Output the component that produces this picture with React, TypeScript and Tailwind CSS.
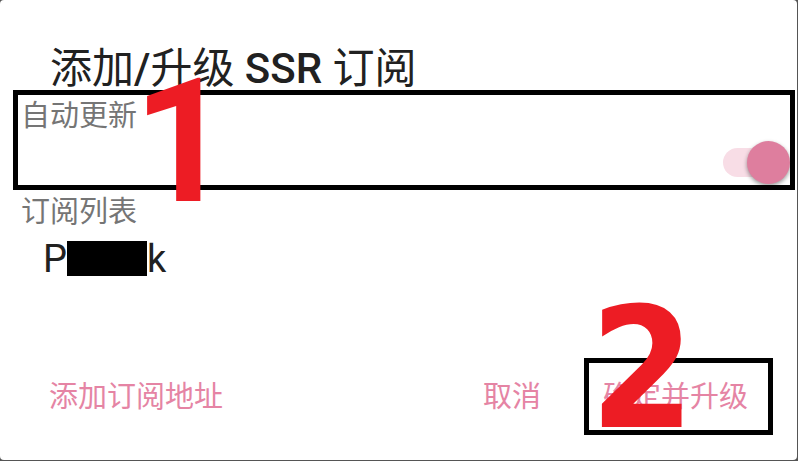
import { useState } from "react";

export default function App() {
  const [autoUpdate, setAutoUpdate] = useState(true);

  return (
    <div className="flex min-h-screen bg-[#555555] pr-px pb-px font-[Roboto,'Noto_Sans_CJK_SC',sans-serif]">
      <main className="flex flex-1 flex-col rounded bg-white pt-12">
        <h1 className="pl-[50px] text-[42px] leading-[42px] text-[#212121]">
          添加<span className="font-medium">/</span>升级 <span className="font-medium">SSR</span> 订阅
        </h1>

        <section className="relative mr-0.5 ml-[13px] h-[100px] border-5 border-black pl-[3px]">
          <label htmlFor="auto-update" className="block text-[29px] leading-[42px] text-[#757575]">
            自动更新
          </label>
          <div className="relative ml-auto h-11 w-[67px]">
            <input
              id="auto-update"
              type="checkbox"
              role="switch"
              checked={autoUpdate}
              onChange={(e) => setAutoUpdate(e.target.checked)}
              className="peer absolute inset-0 z-10 h-full w-full cursor-pointer opacity-0"
            />
            <span className="absolute top-[11px] left-0 h-[29px] w-[58px] rounded-full bg-[#f8dde6]" />
            <span className="absolute top-1 right-0 size-[43px] rounded-full bg-[#de7e9e] shadow-[0_2px_4px_rgba(0,0,0,0.4)] peer-not-checked:right-6" />
          </div>
          <span className="pointer-events-none absolute -top-[39px] left-[115px] font-[Roboto,sans-serif] text-[172px] leading-[172px] font-bold text-[#ed1c24]">
            1
          </span>
        </section>

        <section className="pl-[21px]">
          <h2 className="text-[29px] leading-[44px] text-[#757575]">订阅列表</h2>
          <p className="flex items-center pl-[22px] text-[38px] leading-[50px] text-[#212121]">
            P
            <span className="mb-0.5 h-[35px] w-20 bg-black" />k
          </p>
        </section>

        <footer className="mt-auto flex items-center pr-6 pb-[25px] pl-[49px] text-[29px] text-[#e584a4]">
          <button type="button" className="pt-0.5">
            添加订阅地址
          </button>
          <button type="button" className="mr-[43px] ml-auto pt-0.5">
            取消
          </button>
          <div className="relative border-5 border-black pr-5 pl-[14px]">
            <button type="button" className="block h-[67px] pt-0.5">
              确定并升级
            </button>
            <span className="pointer-events-none absolute -top-20 left-px font-['DejaVu_Sans_Condensed','DejaVu_Sans',sans-serif] text-[167px] leading-[172px] font-bold text-[#ed1c24]">
              2
            </span>
          </div>
        </footer>
      </main>
    </div>
  );
}
